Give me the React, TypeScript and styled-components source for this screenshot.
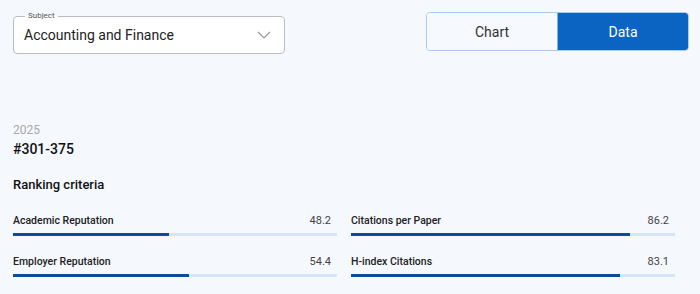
import React from "react";
import { styled, createGlobalStyle } from "styled-components";

const GlobalStyle = createGlobalStyle`
  html, body {
    margin: 0;
    padding: 0;
    background: #f5f8fd;
    font-family: Roboto, "Noto Sans", Arial, sans-serif;
    color: #1a1a1a;
  }
`;

const Page = styled.div`
  width: 700px;
  height: 294px;
  box-sizing: border-box;
  padding: 12px 11px 0 13px;
  display: flex;
  flex-direction: column;
`;

const TopBar = styled.div`
  display: flex;
  justify-content: space-between;
  align-items: flex-start;
`;

const SelectBox = styled.fieldset`
  width: 272px;
  height: 42px;
  box-sizing: border-box;
  margin: 0;
  padding: 0 13px 0 10px;
  border: 1px solid #b9bcc2;
  border-radius: 4px;
  background: #fff;
  display: flex;
  align-items: center;
  justify-content: space-between;
`;

const Legend = styled.legend`
  font-size: 8px;
  color: #555;
  padding: 0 3px;
  margin-left: 1px;
  line-height: 8px;
`;

const SelectValue = styled.span`
  font-size: 14px;
  color: #222;
  margin-top: -3px;
`;

const Chevron = styled.svg`
  width: 14px;
  height: 8px;
  margin-top: -3px;
`;

const Toggle = styled.div`
  display: flex;
  width: 263px;
  height: 39px;
  box-sizing: border-box;
  border: 1px solid #a9c9ee;
  border-radius: 4px;
  overflow: hidden;
`;

const ToggleButton = styled.button<{ $active?: boolean }>`
  flex: 1;
  border: none;
  margin: 0;
  font-family: inherit;
  font-size: 14px;
  background: ${(p) => (p.$active ? "#0b64c2" : "#f6f9fd")};
  color: ${(p) => (p.$active ? "#fff" : "#333")};
  border-left: ${(p) => (p.$active ? "1px solid #7fb0e8" : "none")};
`;

const Year = styled.div`
  margin-top: 69px;
  font-size: 12px;
  color: #a9a9a9;
  line-height: 15px;
`;

const Rank = styled.div`
  margin-top: 2px;
  font-size: 14px;
  font-weight: 500;
  color: #111;
  line-height: 18px;
`;

const SectionTitle = styled.div`
  margin-top: 18px;
  font-size: 13px;
  font-weight: 500;
  color: #111;
  line-height: 18px;
`;

const Grid = styled.div`
  margin-top: 20px;
  width: 662px;
  display: grid;
  grid-template-columns: 324px 324px;
  column-gap: 14px;
  row-gap: 19px;
`;

const Criterion = styled.div`
  display: flex;
  flex-direction: column;
`;

const CriterionHead = styled.div`
  display: flex;
  justify-content: space-between;
  align-items: baseline;
  padding-right: 6px;
  line-height: 13px;
`;

const CriterionName = styled.span`
  font-size: 10.5px;
  font-weight: 500;
  color: #222;
`;

const CriterionScore = styled.span`
  font-size: 11px;
  color: #444;
`;

const Track = styled.div`
  margin-top: 6px;
  height: 3px;
  background: #d5e5f8;
`;

const Fill = styled.div`
  height: 100%;
  background: #0e4a9f;
`;

const criteria = [
  { name: "Academic Reputation", score: 48.2 },
  { name: "Citations per Paper", score: 86.2 },
  { name: "Employer Reputation", score: 54.4 },
  { name: "H-index Citations", score: 83.1 },
];

export default function App() {
  return (
    <Page>
      <GlobalStyle />
      <TopBar>
        <SelectBox>
          <Legend>Subject</Legend>
          <SelectValue>Accounting and Finance</SelectValue>
          <Chevron viewBox="0 0 14 8">
            <path d="M1 1l6 6 6-6" fill="none" stroke="#9a9a9a" strokeWidth="1.2" />
          </Chevron>
        </SelectBox>
        <Toggle>
          <ToggleButton>Chart</ToggleButton>
          <ToggleButton $active>Data</ToggleButton>
        </Toggle>
      </TopBar>
      <Year>2025</Year>
      <Rank>#301-375</Rank>
      <SectionTitle>Ranking criteria</SectionTitle>
      <Grid>
        {criteria.map((c) => (
          <Criterion key={c.name}>
            <CriterionHead>
              <CriterionName>{c.name}</CriterionName>
              <CriterionScore>{c.score}</CriterionScore>
            </CriterionHead>
            <Track>
              <Fill style={{ width: `${c.score}%` }} />
            </Track>
          </Criterion>
        ))}
      </Grid>
    </Page>
  );
}
